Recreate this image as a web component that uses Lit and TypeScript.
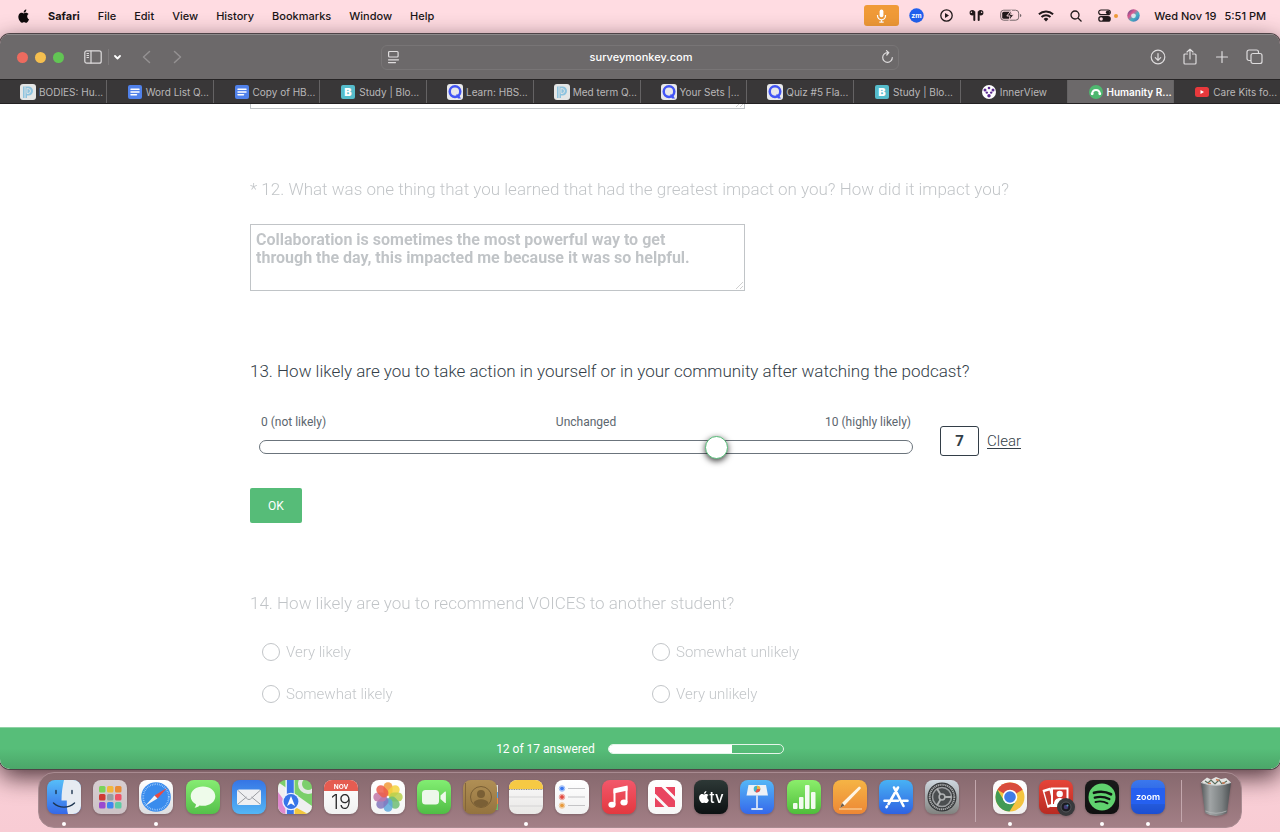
import { LitElement, html, css, svg, nothing } from "lit";
import { customElement, state } from "lit/decorators.js";
import { classMap } from "lit/directives/class-map.js";

const APPLE = "M12.2 8.5c0-1.6 1.3-2.4 1.4-2.4-.8-1.1-2-1.3-2.4-1.3-1-.1-2 .6-2.5.6s-1.3-.6-2.1-.6C5.500 4.800 4.500 5.500 3.900 6.400c-1.200 2-.3 5 .9 6.700.6.8 1.200 1.700 2.100 1.700.8 0 1.100-.5 2.100-.5s1.300.5 2.100.5c.9 0 1.500-.8 2-1.600.6-.9.9-1.800.9-1.900 0 0-1.800-.7-1.800-2.800zM10.600 3.700c.4-.5.800-1.300.7-2.100-.7 0-1.500.5-2 1-.4.5-.8 1.300-.7 2 .8.100 1.600-.4 2-.9z";

@customElement("menu-bar")
class MenuBar extends LitElement {
  static styles = css`
    :host { display: flex; align-items: center; justify-content: space-between; height: 31px; padding: 0 14px 0 17px; box-sizing: border-box; font: 500 11px/16px Inter, "Liberation Sans", sans-serif; color: #1a1416; }
    nav, .status { display: flex; align-items: center; }
    nav { gap: 18px; }
    button { border: 0; padding: 0; background: none; font: inherit; color: inherit; }
    .app { font-weight: 700; }
    svg { display: block; }
    .status { gap: 16px; }
    .mic { width: 35px; height: 21px; border-radius: 3px; background: #f09a37; display: grid; place-items: center; margin-right: -6px; }
    .clock { display: flex; gap: 8px; margin-left: -2px; }
    .pair { display: flex; align-items: center; gap: 3px; margin-right: -7px; }
    .dot { width: 4px; height: 4px; border-radius: 50%; background: #f09a37; }
  `;
  render() {
    return html`
      <nav>
        <svg width="13" height="16" viewBox="2 0 13 16" fill="#0d0a0b"><path d=${APPLE}/></svg>
        ${["Safari", "File", "Edit", "View", "History", "Bookmarks", "Window", "Help"].map(
          (t, i) => html`<button class=${classMap({ app: i === 0 })}>${t}</button>`)}
      </nav>
      <div class="status">
        <span class="mic"><svg width="11" height="14" viewBox="0 0 11 14" fill="none" stroke="#fff" stroke-width="1.200"><rect x="3.600" y=".6" width="3.800" height="7.600" rx="1.900" fill="#fff" stroke="none"/><path d="M1.500 6v.8a4 4 0 0 0 8 0V6M5.500 10.800v2.200M3.300 13.200h4.400"/></svg></span>
        <svg width="15" height="15" viewBox="0 0 15 15"><circle cx="7.500" cy="7.500" r="7.200" fill="#2160ee"/><text x="7.500" y="9.800" text-anchor="middle" font-size="7" font-weight="700" fill="#fff">zm</text></svg>
        <svg width="13" height="13" viewBox="0 0 13 13"><circle cx="6.500" cy="6.500" r="5.700" fill="none" stroke="#221a1c" stroke-width="1.300"/><path d="M5 4v5l4-2.500z" fill="#221a1c"/></svg>
        <svg width="15" height="13" viewBox="0 0 15 13" fill="#221a1c"><circle cx="3.300" cy="3.700" r="2.700"/><circle cx="11.700" cy="3.700" r="2.700"/><path d="M4.300 2.500h2V11a1 1 0 0 1-2 0zM8.700 2.500h2V11a1 1 0 0 1-2 0z"/><circle cx="2.400" cy="3.300" r=".7" fill="#ffdce2"/><circle cx="12.600" cy="3.300" r=".7" fill="#ffdce2"/></svg>
        <svg width="22" height="13" viewBox="0 0 22 13"><rect x=".7" y="1.200" width="18" height="10" rx="3" fill="none" stroke="#75676a" /><rect x="2.200" y="2.700" width="9" height="7" rx="1.500" fill="#221a1c"/><path d="M20 5v3c1-.2 1.300-.8 1.300-1.500S21 5.200 20 5z" fill="#75676a"/><path d="M11.500 1 6.800 7h3.200l-1 4.800L13.800 5.600h-3.200z" fill="#221a1c" stroke="#ffdce2" stroke-width=".9"/></svg>
        <svg width="16" height="12" viewBox="0 0 16 12" fill="none" stroke="#221a1c" stroke-width="1.900"><path d="M.9 4.300a10.300 10.300 0 0 1 14.200 0"/><path d="M3.500 7a6.500 6.500 0 0 1 9 0"/><path d="M5.600 8.900a3.400 3.400 0 0 1 4.800 0L8 11.500z" fill="#221a1c" stroke="none"/></svg>
        <svg width="12" height="12" viewBox="0 0 12 12" fill="none" stroke="#221a1c" stroke-width="1.300"><circle cx="5" cy="5" r="4"/><path d="m8 8 3.500 3.500"/></svg>
        <span class="pair">
          <svg width="13" height="13" viewBox="0 0 13 13"><rect x=".7" y="1" width="11.600" height="4.700" rx="2.350" fill="none" stroke="#221a1c" stroke-width="1.200"/><circle cx="9.800" cy="3.350" r="1.900" fill="#221a1c"/><rect x=".2" y="7.100" width="12.600" height="5.700" rx="2.850" fill="#221a1c"/><circle cx="3.200" cy="9.950" r="1.700" fill="#ffdce2"/></svg>
          <i class="dot"></i>
        </span>
        <svg width="13" height="13" viewBox="0 0 13 13"><defs><linearGradient id="siri" x2="1" y2="1"><stop stop-color="#3d4a8a"/><stop offset=".35" stop-color="#e0588f"/><stop offset=".6" stop-color="#45b5c4"/><stop offset="1" stop-color="#4b60c0"/></linearGradient></defs><circle cx="6.500" cy="6.500" r="6.200" fill="url(#siri)"/><circle cx="6.500" cy="6.800" r="2.400" fill="#fff" opacity=".75"/></svg>
        <span class="clock"><span>Wed Nov 19</span><span>5:51 PM</span></span>
      </div>`;
  }
}

const fav: Record<string, any> = {
  p: svg`<rect width="16" height="16" rx="3" fill="#e4e6e6"/><path d="M3 2.500h5.500a4.500 4.500 0 0 1 0 9H7v2.500H3z" fill="#8dc3df"/><path d="M5 3v11M8 4.500a2.300 2.300 0 0 1 0 5H7v-5z" fill="none" stroke="#e4e6e6" stroke-width=".9"/>`,
  doc: svg`<rect x="1" y="1" width="14" height="14" rx="2" fill="#5081ea"/><path d="M4 5.200h8M4 8h8M4 10.800h5.500" stroke="#fff" stroke-width="1.500"/>`,
  b: svg`<rect x="1" y="1" width="14" height="14" rx="2" fill="#56bccb"/><text x="8" y="12" text-anchor="middle" font-size="11" font-weight="900" fill="#fff">B</text>`,
  q: svg`<rect width="16" height="16" rx="3" fill="#e8e8ea"/><circle cx="8" cy="7.600" r="5.300" fill="none" stroke="#4255f5" stroke-width="2.500"/><path d="M9 10.500h2.500l2.500 4h-3z" fill="#4255f5"/>`,
  iv: svg`<circle cx="8" cy="8" r="7" fill="#fff"/><g fill="#5b2a91"><circle cx="4" cy="6" r="1.500"/><circle cx="8" cy="4" r="1.300"/><circle cx="12" cy="6" r="1.500"/><circle cx="5.800" cy="8.600" r="1.200"/><circle cx="10.200" cy="8.600" r="1.200"/><circle cx="8" cy="11.800" r="1.700"/></g>`,
  sm: svg`<circle cx="8" cy="8" r="7" fill="#4fb870"/><path d="M4.200 9.800C4.500 4.800 11.500 4.800 11.800 9.800" fill="none" stroke="#fff" stroke-width="2"/><circle cx="4.200" cy="9.800" r="1.400" fill="#fff"/><circle cx="11.800" cy="9.800" r="1.400" fill="#fff"/>`,
  yt: svg`<rect x="1" y="3" width="14" height="10" rx="2.500" fill="#e8393c"/><path d="M6.500 6v4L10 8z" fill="#fff"/>`,
};

const tabs: [string, string][] = [
  ["p", "BODIES: Hu..."], ["doc", "Word List Q..."], ["doc", "Copy of HB..."], ["b", "Study | Blo..."],
  ["q", "Learn: HBS..."], ["p", "Med term Q..."], ["q", "Your Sets |..."], ["q", "Quiz #5 Fla..."],
  ["b", "Study | Blo..."], ["iv", "InnerView"], ["sm", "Humanity R..."], ["yt", "Care Kits fo..."],
];

@customElement("browser-chrome")
class BrowserChrome extends LitElement {
  static styles = css`
    :host { display: block; font: 500 11px/16px Inter, "Liberation Sans", sans-serif; color: #f4f2f3; background: #6c696a; }
    button { border: 0; padding: 0; background: none; font: inherit; color: inherit; display: block; }
    svg { display: block; fill: none; stroke: #dedcdd; stroke-width: 1.2; stroke-linecap: round; stroke-linejoin: round; }
    .toolbar { display: grid; grid-template-columns: 1fr 518px 1fr; align-items: center; height: 45px; box-sizing: border-box; border-top: 1px solid #8d8a8b; padding: 0 17px; }
    .left, .right { display: flex; align-items: center; }
    .lights { display: flex; gap: 7px; margin-right: 20px; }
    .light { width: 11px; height: 11px; border-radius: 50%; }
    .red { background: #ed6b5f; } .yellow { background: #f5bf4f; } .green { background: #62c554; }
    .rule { width: 1px; height: 16px; background: #7d7a7b; margin: 0 5px 0 6px; }
    .arrows { display: flex; gap: 22px; margin-left: 21px; }
    .arrows svg { stroke: #949192; stroke-width: 1.5; }
    .white { stroke: #fff; stroke-width: 1.8; }
    .address { display: grid; grid-template-columns: 16px 1fr 16px; align-items: center; height: 25px; box-sizing: border-box; border: 1px solid #787576; border-radius: 6px; padding: 0 1px 0 3px; }
    input { border: 0; background: none; color: #fff; font: inherit; text-align: center; outline: 0; min-width: 0; }
    .right { justify-content: flex-end; gap: 16px; }
    .tabs { display: flex; height: 25px; box-sizing: border-box; border-top: 1px solid #262425; border-bottom: 1px solid #232122; background: #393738; }
    .tab { flex: 1 1 0; min-width: 0; display: flex; align-items: center; gap: 3px; padding-left: 20px; box-sizing: border-box; border-right: 1px solid #656364; overflow: hidden; white-space: nowrap; font-size: 10px; font-weight: 400; color: #b9b7b8; }
    .tab svg { stroke: none; flex: none; }
    .tab svg text { font-family: Inter, sans-serif; }
    .active { background: #6c696a; color: #fff; font-weight: 600; }
    .tab:last-child { border-right: 0; }
  `;
  render() {
    return html`
      <div class="toolbar">
        <div class="left">
          <div class="lights"><i class="light red"></i><i class="light yellow"></i><i class="light green"></i></div>
          <button aria-label="Sidebar"><svg width="18" height="14" viewBox="0 0 18 14"><rect x=".8" y=".8" width="16.400" height="12.400" rx="2"/><path d="M7 1v12M3 3.500h1.500M3 5.500h1.500M3 7.500h1.500"/></svg></button>
          <i class="rule"></i>
          <button aria-label="Tab groups"><svg class="white" width="7" height="5" viewBox="0 0 7 5"><path d="m1 1 2.500 2.500L6 1"/></svg></button>
          <div class="arrows">
            <button aria-label="Back"><svg width="9" height="14" viewBox="0 0 9 14"><path d="M7.500 1.500 1.500 7l6 5.500"/></svg></button>
            <button aria-label="Forward"><svg width="9" height="14" viewBox="0 0 9 14"><path d="m1.500 1.500 6 5.500-6 5.500"/></svg></button>
          </div>
        </div>
        <div class="address">
          <svg width="16" height="14" viewBox="0 0 16 14"><rect x="3.600" y="1.500" width="9.500" height="5.500" rx="1"/><path d="M3.500 9.800h10M3.500 12.600h7"/></svg>
          <input aria-label="Address" value="surveymonkey.com">
          <button aria-label="Reload"><svg width="13" height="14" viewBox="0 0 13 14"><path d="M11.300 7.500a4.800 4.800 0 1 1-4.800-4.800h1M5.500.6l2.300 2.100-2 2.300"/></svg></button>
        </div>
        <div class="right">
          <button aria-label="Downloads"><svg width="16" height="16" viewBox="0 0 16 16"><circle cx="8" cy="8" r="6.800"/><path d="M8 4.500v6.700M5.300 8.700 8 11.400l2.700-2.700"/></svg></button>
          <button aria-label="Share"><svg width="16" height="18" viewBox="0 0 16 18"><path d="M5.500 6H3a1 1 0 0 0-1 1v8a1 1 0 0 0 1 1h10a1 1 0 0 0 1-1V7a1 1 0 0 0-1-1h-2.500M8 11V1.500M5 4l3-2.700L11 4"/></svg></button>
          <button aria-label="New tab"><svg width="16" height="16" viewBox="0 0 16 16"><path d="M8 2.500v11M2.500 8h11"/></svg></button>
          <button aria-label="Tab overview"><svg width="17" height="16" viewBox="0 0 17 16"><rect x="5" y="4.500" width="11" height="10" rx="2"/><path d="M4.500 11.500H3a2 2 0 0 1-2-2V3a2 2 0 0 1 2-2h7.500a2 2 0 0 1 2 2v1"/></svg></button>
        </div>
      </div>
      <div class="tabs">
        ${tabs.map(([icon, label]) => html`<button class=${classMap({ tab: true, active: icon === "sm" })}>
          <svg width="16" height="16" viewBox="0 0 16 16">${fav[icon]}</svg><span>${label}</span></button>`)}
      </div>`;
  }
}

@customElement("survey-page")
class SurveyPage extends LitElement {
  @state() private value = 7;
  static styles = css`
    :host { display: flex; flex-direction: column; flex: 1; min-height: 0; background: #fff; font-family: Roboto, "Open Sans", sans-serif; color: #333e48; }
    .scroll { flex: 1; min-height: 0; overflow: hidden; }
    .column { max-width: 780px; margin: -62px auto 0; }
    .faded { opacity: .3; }
    section { margin-top: 68px; }
    h2 { margin: 0; font-size: 17px; line-height: 24px; font-weight: 300; }
    textarea { display: block; width: 495px; max-width: 100%; height: 67px; box-sizing: border-box; border: 1px solid #333e48; border-radius: 0; margin: 0; padding: 6px 30px 6px 5px; background: #fff; color: #333e48; font: 700 16px/18px Roboto, sans-serif; }
    h2 + textarea { margin-top: 23px; }
    .rating { display: flex; align-items: flex-start; margin: 31px 9px 32px 9px; }
    .scale { flex: 1; }
    .marks { display: grid; grid-template-columns: 1fr 1fr 1fr; padding: 0 2px; font-size: 12px; line-height: 16px; color: #5c666e; }
    .marks span:nth-child(2) { text-align: center; }
    .marks span:nth-child(3) { text-align: right; }
    .track { display: flex; align-items: center; height: 14px; box-sizing: border-box; margin-top: 10px; border: 1px solid #6b747c; border-radius: 7px; }
    .track input { appearance: none; flex: 1; min-width: 0; height: 24px; margin: 0 -12px; background: none; outline: 0; }
    .track input::-webkit-slider-thumb { appearance: none; width: 23px; height: 23px; border-radius: 50%; border: 1px solid #56bc78; background: #fff; box-shadow: 0 2px 6px rgba(0, 0, 0, .75); }
    .answer { display: flex; align-items: center; gap: 8px; margin: 12px 0 0 27px; }
    .answer input { width: 39px; height: 30px; box-sizing: border-box; border: 1px solid #333e48; border-radius: 3px; padding: 0; text-align: center; font: 700 15px/18px Roboto, sans-serif; color: #333e48; }
    .answer a { font-size: 15px; line-height: 20px; font-weight: 300; color: #333e48; text-underline-offset: 2px; }
    .ok { display: block; width: 52px; height: 35px; border: 0; border-radius: 2px; padding: 0; background: #56bc78; color: #fff; font: 400 12px/16px Roboto, sans-serif; }
    .options { display: grid; grid-template-columns: 1fr 1fr; grid-template-rows: repeat(3, 42px); grid-auto-flow: column; margin-top: 16px; padding-left: 12px; column-gap: 12px; }
    .options label { display: flex; align-items: center; gap: 6px; font-size: 15px; font-weight: 300; line-height: 20px; }
    .options input { appearance: none; width: 18px; height: 18px; margin: 0; border: 1px solid #333e48; border-radius: 50%; }
    footer { display: flex; align-items: center; justify-content: center; gap: 13px; height: 42px; box-sizing: border-box; border-top: 1px solid #8fd2a5; background: linear-gradient(#57be79 50%, #4ba669); color: #fff; font-size: 12px; line-height: 16px; }
    .progress { width: 176px; height: 10px; box-sizing: border-box; border: 1px solid #e5f5ea; border-radius: 5px; overflow: hidden; }
    .bar { height: 100%; background: #fff; }
  `;
  private set(e: Event) { this.value = Number((e.target as HTMLInputElement).value); }
  render() {
    const radio = (t: string) => html`<label><input type="radio" name="recommend" aria-label=${t || "Neither"}>${t}</label>`;
    return html`
      <div class="scroll"><div class="column">
        <textarea class="faded" aria-label="Question 11"></textarea>
        <section class="faded">
          <h2 id="q12">* 12. What was one thing that you learned that had the greatest impact on you? How did it impact you?</h2>
          <textarea aria-labelledby="q12" spellcheck="false">Collaboration is sometimes the most powerful way to get through the day, this impacted me because it was so helpful.</textarea>
        </section>
        <section>
          <h2 id="q13">13. How likely are you to take action in yourself or in your community after watching the podcast?</h2>
          <div class="rating">
            <div class="scale">
              <div class="marks"><span>0 (not likely)</span><span>Unchanged</span><span>10 (highly likely)</span></div>
              <div class="track"><input type="range" min="0" max="10" aria-labelledby="q13" .value=${String(this.value)} @input=${this.set}></div>
            </div>
            <div class="answer"><input type="text" aria-labelledby="q13" .value=${String(this.value)} @change=${this.set}><a href="#">Clear</a></div>
          </div>
          <button class="ok">OK</button>
        </section>
        <section class="faded">
          <h2>14. How likely are you to recommend VOICES to another student?</h2>
          <div class="options">${["Very likely", "Somewhat likely", "", "Somewhat unlikely", "Very unlikely"].map(radio)}</div>
        </section>
      </div></div>
      <footer><span>12 of 17 answered</span><div class="progress"><div class="bar" style="width:${(12 / 17) * 100}%"></div></div></footer>`;
  }
}

const tile = (id: string, a: string, b: string, inner: unknown) => svg`
  <defs><linearGradient id=${id} x2="0" y2="1"><stop stop-color=${a}/><stop offset="1" stop-color=${b}/></linearGradient></defs>
  <rect width="34" height="34" rx="8" fill="url(#${id})"/>${inner}`;

const petals = ["#f19a38", "#f3d33d", "#b7cf4c", "#6fbd74", "#5fa8dc", "#8277bd", "#c277a8", "#ec5d4a"];
const grid = ["#7bd45a", "#f2b63c", "#ea8b34", "#cf3a33", "#9a9ea3", "#ee5266", "#9a49d0", "#3f86f0", "#5fcba4"];

const dockIcons: [string, any, boolean?][] = [
  ["Finder", tile("fi", "#56bdf8", "#3568e8", svg`<path d="M17 0h9a8 8 0 0 1 8 8v18a8 8 0 0 1-8 8h-5c-1-4-1.300-8-1.200-13.500h-5.300C14.500 13 15.500 6 17 0z" fill="#e6ebf2"/><path d="M9 10.500v3M25 10.500v3M6.500 23c6 5.500 15 5.500 21 0" fill="none" stroke="#1d3550" stroke-width="1.400" stroke-linecap="round"/>`), true],
  ["Launchpad", tile("lp", "#d7ced1", "#cdc2c6", grid.map((c, i) => svg`<rect x=${6 + (i % 3) * 8} y=${6 + Math.floor(i / 3) * 8} width="6.500" height="6.500" rx="1.500" fill=${c}/>`))],
  ["Safari", tile("sa", "#fff", "#dddde0", svg`<circle cx="17" cy="17" r="14.800" fill="#3a8ced"/><circle cx="17" cy="17" r="12.800" fill="none" stroke="#b9dbff" stroke-width="1.800" stroke-dasharray=".6 1.200"/><path d="M28 8 15.500 15.500l3 3z" fill="#ec4a40"/><path d="m6 26 12.500-7.500-3-3z" fill="#f4f4f6"/>`), true],
  ["Messages", tile("me", "#86ec72", "#55c04a", svg`<path d="M17 6.500c7 0 12.300 4.200 12.300 9.700S24 25.800 17 25.800c-1.200 0-2.400-.1-3.500-.4-1.200 1.300-3 2.200-5 2.300 1-1 1.500-2.200 1.400-3.500-3.200-1.700-5.200-4.600-5.200-8C4.700 10.700 10 6.500 17 6.500z" fill="#eefbea"/>`)],
  ["Mail", tile("ma", "#3675e5", "#54b6f5", svg`<rect x="5" y="9.500" width="24" height="15.500" rx="2" fill="#efeff1"/><path d="m6 10.500 9.500 8.500q1.500 1.200 3 0l9.500-8.500M6 24l8.500-7M28 24l-8.500-7" fill="none" stroke="#9b9da2" stroke-width="1"/>`)],
  ["Maps", svg`<defs><clipPath id="mp"><rect width="34" height="34" rx="8"/></clipPath></defs><g clip-path="url(#mp)"><path d="M0 0h34v34H0z" fill="#7ccf6b"/><path d="M0 8 34 29v9H0z" fill="#f0eff0"/><path d="M0 12 16 34H0z" fill="#df89cf"/><path d="M17 27 30 34H14z" fill="#f3c73c"/><circle cx="30" cy="4" r="8" fill="none" stroke="#e5e8e5" stroke-width="4"/><path d="M0 2 34 26v6L0 9z" fill="#f0eff0"/><path d="M7.500 0h9v34h-9z" fill="#fff"/><path d="M8.800 0h7v34h-7z" fill="#3c77e9"/><circle cx="13" cy="21.500" r="8.800" fill="#e9f0ff"/><circle cx="13" cy="21.500" r="7.400" fill="#3675e9"/><path d="m13 16 4 10-4-2.500L9 26z" fill="#fff"/></g>`],
  ["Calendar", tile("ca", "#fff", "#f1f1f1", svg`<path d="M8 0h18a8 8 0 0 1 8 8v3H0V8a8 8 0 0 1 8-8z" fill="#e55c51"/><text x="17" y="8.500" text-anchor="middle" font-size="6.500" font-weight="700" fill="#fff">NOV</text><text x="17" y="28.500" text-anchor="middle" font-size="20" font-weight="300" fill="#2a2a2c">19</text>`)],
  ["Photos", tile("ph", "#fff", "#f4f4f4", petals.map((c, i) => svg`<rect x="12.500" y="2.300" width="9" height="13.500" rx="4.500" fill=${c} opacity=".85" transform=${`rotate(${i * 45} 17 17)`}/>`))],
  ["FaceTime", tile("ft", "#82ee72", "#50bd45", svg`<rect x="5" y="10" width="17" height="14.500" rx="3.500" fill="#edf8ea"/><path d="m23.500 15.500 4.500-4q.9-.4.9.6v10.300q0 1-.9.6l-4.500-4z" fill="#edf8ea"/>`)],
  ["Contacts", svg`<path d="M30 5h5v7h-5z" fill="#d9dcdc"/><path d="M30 12h5v6h-5z" fill="#55a3e0"/><path d="M30 18h5v6h-5z" fill="#ee8e38"/><path d="M30 24h5v6h-5z" fill="#69bd6a"/>${tile("co", "#b08f55", "#94733f", svg`<circle cx="18" cy="17" r="10.500" fill="none" stroke="#7a5f35" stroke-width="1"/><circle cx="18" cy="14" r="4" fill="#7a5f35"/><path d="M10.500 23c2-5 13-5 15 0-3 5.500-12 5.500-15 0z" fill="#7a5f35"/><path d="M2.500 3v28" stroke="#84663a"/>`)}`],
  ["Notes", tile("no", "#fafafa", "#e9e8e6", svg`<path d="M8 0h18a8 8 0 0 1 8 8v1H0V8a8 8 0 0 1 8-8z" fill="#f6c944"/><path d="M0 9.500h34" stroke="#8f8a7c" stroke-dasharray="1 .7"/><path d="M0 17h34M0 26h34" stroke="#cfcfcf" stroke-width=".8"/>`), true],
  ["Reminders", tile("re", "#fff", "#f1f1f1", svg`${["#3a78f0", "#e24a40", "#e89a3c"].map((c, i) => svg`<circle cx="7" cy=${8.5 + i * 8.5} r="2.800" fill="none" stroke=${c} stroke-width=".7" opacity=".7"/><circle cx="7" cy=${8.5 + i * 8.5} r="2" fill=${c}/><path d="M13 ${8.5 + i * 8.5}h17" stroke="#c4c4c6" stroke-width="1"/>`)}`)],
  ["Music", tile("mu", "#f2586b", "#e3383f", svg`<path d="M12.500 9.500v15M24.500 6.500V22" stroke="#fff" stroke-width="2"/><path d="m11.500 8.500 14-3v5l-14 3z" fill="#fff"/><ellipse cx="10" cy="24.800" rx="3.600" ry="3" fill="#fff"/><ellipse cx="22" cy="22.500" rx="3.600" ry="3" fill="#fff"/>`)],
  ["News", tile("ne", "#fff", "#f6f6f6", svg`<path d="M7 7h6.500L27 20.500V27h-6.500L7 13.500z" fill="#e94560"/><path d="M17.500 7H27v9.500zM7 17.500V27h9.500z" fill="#e94560"/>`)],
  ["TV", tile("tv", "#2d3836", "#0c1112", svg`<g transform="translate(2 9.500) scale(.92)" fill="#fff"><path d=${APPLE}/></g><text x="15.500" y="22.500" font-size="15" font-weight="500" fill="#fff">tv</text>`)],
  ["Keynote", tile("ke", "#55b7f7", "#3568ea", svg`<path d="M8.500 5h17.500l2 10.500H6.500z" fill="#eef1f6"/><circle cx="17" cy="9" r="3.300" fill="#47b4c4"/><path d="M17 9V5.700A3.300 3.300 0 0 1 20.300 9z" fill="#f2b33f"/><path d="M17 9h3.300a3.300 3.300 0 0 1-5 2.900z" fill="#e8504b"/><path d="M17 16v12M12 29h10" stroke="#d7e3f7" stroke-width="1.800" stroke-linecap="round"/>`)],
  ["Numbers", tile("nu", "#8bee6b", "#4fbd3b", svg`<g fill="#f2fbef"><rect x="6" y="23" width="4.500" height="6" rx="1"/><rect x="12" y="17" width="4.500" height="12" rx="1"/><rect x="18" y="5" width="4.500" height="24" rx="1"/><rect x="24" y="12" width="4.500" height="17" rx="1"/></g>`)],
  ["Pages", tile("pa", "#f5b445", "#ed8735", svg`<path d="m7 28 2-5L26 6.500q2 0 1.800 2L11.500 25.500z" fill="#fff5e4"/><path d="m7 28 2-5 2.500 2.500z" fill="#6f5d4b"/><path d="M6 29h23" stroke="#ffe0b2"/>`)],
  ["App Store", tile("as", "#48b2f4", "#2f62e2", svg`<path d="M15 7.500 24.500 26M19 7.500 9.500 24M5.500 20.800H19M24 20.800h4.500M8 26.300l-.5.9" fill="none" stroke="#fff" stroke-width="2.600" stroke-linecap="round"/>`)],
  ["System Settings", tile("se", "#cfd7df", "#81827f", svg`<circle cx="17" cy="17" r="14.500" fill="#343638"/><circle cx="17" cy="17" r="12.300" fill="none" stroke="#a6a8a9" stroke-width="2" stroke-dasharray="1.300 .6"/><circle cx="17" cy="17" r="9.500" fill="#4b4e50" stroke="#9c9ea0" stroke-width="1.600"/><path d="m17 17 9.500 0M17 17l-5-8.500M17 17l-5 8.500" stroke="#b0b2b3" stroke-width="1.900"/><circle cx="17" cy="17" r="2.900" fill="#4b4e50" stroke="#b0b2b3" stroke-width="1.500"/>`)],
  ["|", null],
  ["Chrome", tile("cr", "#fff", "#f0efee", svg`<circle cx="17" cy="17" r="14.500" fill="#f3c33f"/><path d="M17 17 4.400 9.800A14.500 14.500 0 0 1 29.600 9.800z" fill="#d94c3d"/><path d="M4.400 9.800 10.900 20.600 17 24l6-3-6.500 10.500A14.500 14.500 0 0 1 4.400 9.800z" fill="#429a54"/><circle cx="17" cy="17" r="7.300" fill="#fff"/><circle cx="17" cy="17" r="5.800" fill="#3f7be6"/>`), true],
  ["Photo Booth", tile("pb", "#e64539", "#b92a22", svg`<path d="m3.500 10 8-2.500 5 17.500-8 3z" fill="#fff"/><path d="m5.500 12 5-1.600 3.500 13-5 1.600z" fill="#c63a31"/><path d="M12 7.500h17.500V27H12z" fill="#fff"/><path d="M14 9.500h13.500V24H14z" fill="#d2382f"/><circle cx="20.700" cy="14" r="3.200" fill="#fff"/><path d="M15 24c0-8 11.500-8 11.500 0z" fill="#fff"/><circle cx="27" cy="27" r="9" fill="#38393c"/><circle cx="27" cy="27" r="5" fill="#1a1b20" stroke="#55575c"/><circle cx="27" cy="27" r="2.300" fill="#423a72"/><circle cx="28.500" cy="25.500" r="1" fill="#4f9dba"/>`)],
  ["Spotify", tile("sp", "#1a1a1a", "#101010", svg`<circle cx="17" cy="17" r="13.500" fill="#60d26e"/><g fill="none" stroke="#101412" stroke-linecap="round"><path d="M9 12.800c6-1.700 12-1.200 17 1.500" stroke-width="2.700"/><path d="M9.800 17.600c5-1.400 10-.9 14.500 1.500" stroke-width="2.300"/><path d="M10.500 22c4-1 8.300-.7 12 1.300" stroke-width="1.900"/></g>`), true],
  ["Zoom", tile("zo", "#3b78ee", "#1b4ed2", svg`<rect y="8" width="34" height="16" fill="#2560f0"/><text x="17" y="20.200" text-anchor="middle" font-size="9" font-weight="600" fill="#fff">zoom</text>`), true],
  ["|", null],
  ["Trash", svg`<defs><linearGradient id="tr"><stop stop-color="#55595b"/><stop offset=".3" stop-color="#a1a5a6"/><stop offset=".7" stop-color="#7b8081"/><stop offset="1" stop-color="#4c5052"/></linearGradient></defs><path d="M3 1.500 8-2.500l4 2 5-2.500 5 2 5-1 4.500 4-2 5H5z" fill="#e5e5e3"/><path d="m6 1 3 2 3-3 4 4 4-4 3 4 5-3" fill="none" stroke="#5b6e5e" stroke-width="1.200"/><path d="M9 3.500h3M17-.5l3 1M23 3h3" stroke="#cc7b55" stroke-width="1.500"/><path d="M2 2.500q15 5.500 30 0L28 33q-11 6-22 0z" fill="url(#tr)"/><path d="M2 2.500q15 5.500 30 0" fill="none" stroke="#c6c9c9"/><path d="M6.500 31q10.500 4.500 21 0" fill="none" stroke="#b5b9ba" stroke-width=".8"/>`],
];

@customElement("app-dock")
class AppDock extends LitElement {
  static styles = css`
    :host { display: flex; justify-content: space-between; align-items: flex-start; height: 56px; box-sizing: border-box; margin: 3px 38px 4px; padding: 7px 8px 0 8px; border: 1px solid #a88b91; border-radius: 16px; background: linear-gradient(#87696e, #a37f86); font-family: Inter, "Liberation Sans", sans-serif; position: relative; z-index: 1; }
    .app { display: flex; flex-direction: column; align-items: center; gap: 8px; border: 0; padding: 0; background: none; }
    svg { display: block; overflow: visible; filter: drop-shadow(0 1px 1px rgba(0, 0, 0, .2)); }
    .dot { width: 4px; height: 4px; border-radius: 50%; background: #fff; }
    .sep { width: 1px; height: 42px; margin: 0 4px; background: #c3a7ad; }
  `;
  render() {
    return dockIcons.map(([name, icon, running]) => name === "|" ? html`<i class="sep"></i>` : html`
      <button class="app" aria-label=${name}>
        <svg width="34" height="34" viewBox="0 0 34 34" font-family="Inter, sans-serif">${icon}</svg>${running ? html`<i class="dot"></i>` : nothing}
      </button>`);
  }
}

@customElement("app-root")
class AppRoot extends LitElement {
  static styles = css`
    :host { display: flex; flex-direction: column; height: 100vh; overflow: hidden; background: linear-gradient(#ffdce2 60%, #f8ccd4); }
    .window { flex: 1; min-height: 0; display: flex; flex-direction: column; margin-top: 3px; }
    .frame { flex: 1; min-height: 0; display: flex; flex-direction: column; overflow: hidden; border-radius: 10px; box-shadow: 0 0 0 1px #4e4447, 0 8px 24px rgba(30, 8, 14, .8); }
  `;
  render() {
    return html`
      <menu-bar></menu-bar>
      <main class="window"><div class="frame"><browser-chrome></browser-chrome><survey-page></survey-page></div></main>
      <app-dock></app-dock>`;
  }
}
